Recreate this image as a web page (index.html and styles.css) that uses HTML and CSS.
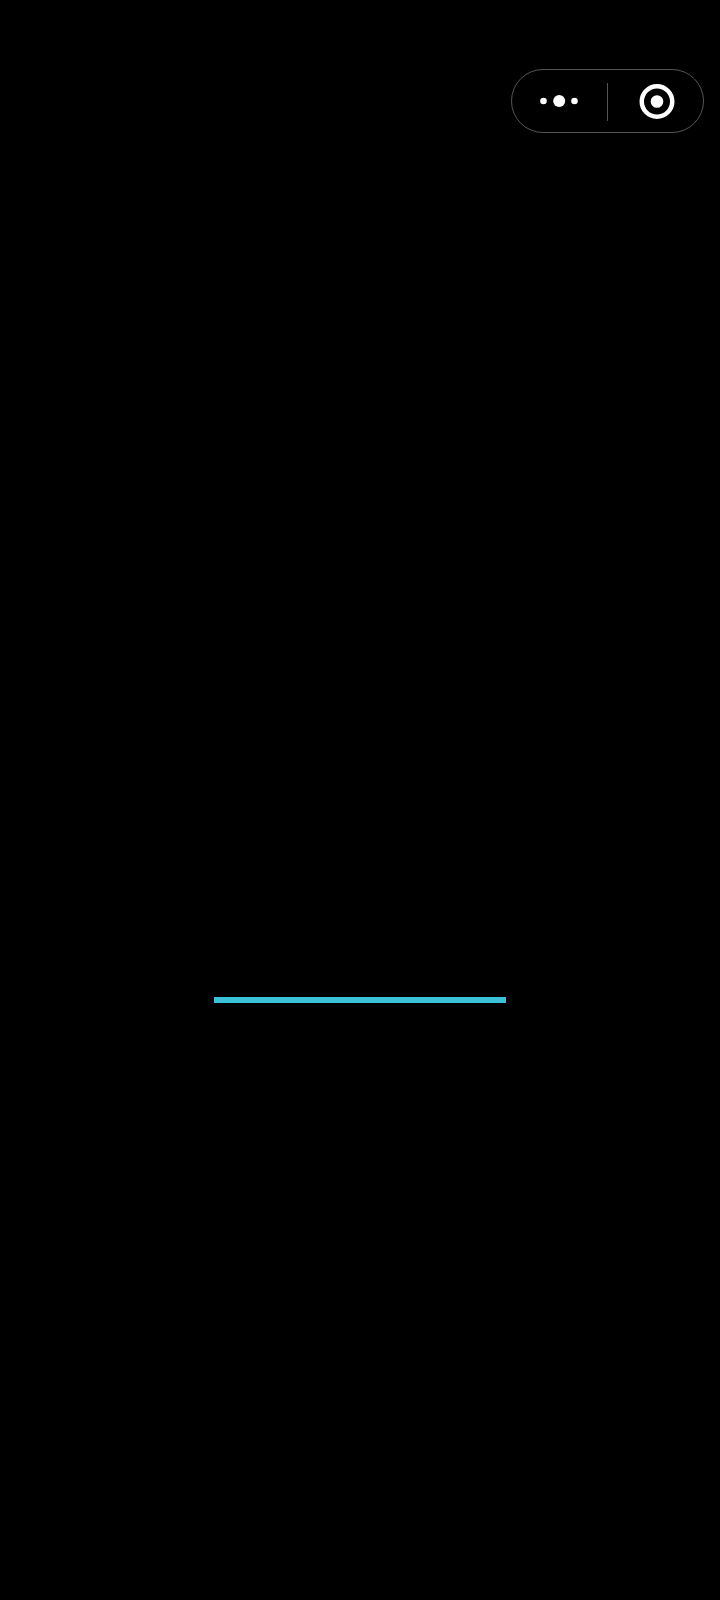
FILE: index.html

```html
<!DOCTYPE html>
<html>
<head>
  <meta name="viewport" content="width=device-width, initial-scale=1">
  <title>Loading</title>
  <link rel="stylesheet" href="styles.css">
</head>
<body>
  <div class="page">
    <div class="capsule">
      <div class="capsule_btn capsule_btn_more">
        <svg class="icon_more" width="40" height="12" viewBox="0 0 40 12">
          <circle cx="3.5" cy="6" r="3.3" fill="#fff"/>
          <circle cx="19.2" cy="6" r="6" fill="#fff"/>
          <circle cx="34.5" cy="6" r="3.3" fill="#fff"/>
        </svg>
      </div>
      <div class="capsule_line"></div>
      <div class="capsule_btn capsule_btn_close">
        <svg class="icon_close" width="36" height="36" viewBox="0 0 36 36">
          <circle cx="18" cy="18.5" r="15.25" fill="none" stroke="#fff" stroke-width="4.5"/>
          <circle cx="18" cy="18.5" r="6.3" fill="#fff"/>
        </svg>
      </div>
    </div>
    <div class="progress"></div>
  </div>
</body>
</html>
```

FILE: styles.css

```css
html, body {margin: 0; padding: 0; background: #000;}
.page {height: 1600px; padding: 69px 16px 0 0; box-sizing: border-box; display: flex; flex-direction: column; align-items: flex-end;}
.capsule {width: 193px; height: 64px; box-sizing: border-box; border: 1px solid #555; border-radius: 32px; display: flex; align-items: center;}
.capsule_btn {display: flex; justify-content: center; align-items: center;}
.capsule_btn_more {width: 95px;}
.capsule_btn_close {flex: 1; padding-left: 3px;}
.capsule_line {width: 1px; height: 38px; margin-top: 2px; background: #555;}
.progress {width: 292px; height: 6px; margin: 864px 198px 0 0; background: #3cc2d8;}
```
